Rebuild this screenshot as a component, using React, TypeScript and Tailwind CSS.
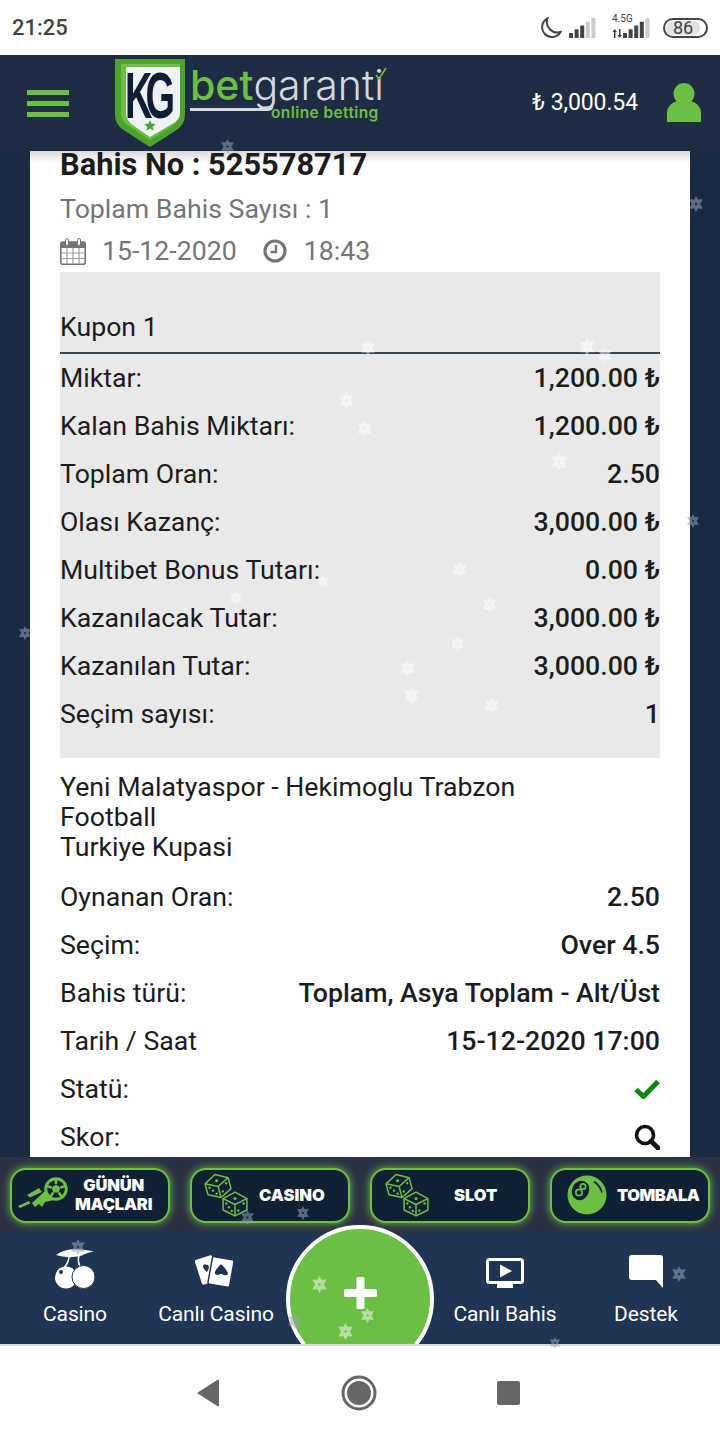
const GREEN = "#6cbe45";

const SUMMARY = [
  ["Miktar:", "1,200.00 ₺"],
  ["Kalan Bahis Miktarı:", "1,200.00 ₺"],
  ["Toplam Oran:", "2.50"],
  ["Olası Kazanç:", "3,000.00 ₺"],
  ["Multibet Bonus Tutarı:", "0.00 ₺"],
  ["Kazanılacak Tutar:", "3,000.00 ₺"],
  ["Kazanılan Tutar:", "3,000.00 ₺"],
  ["Seçim sayısı:", "1"],
];

const DETAILS = [
  ["Oynanan Oran:", "2.50"],
  ["Seçim:", "Over 4.5"],
  ["Bahis türü:", "Toplam, Asya Toplam - Alt/Üst"],
  ["Tarih / Saat", "15-12-2020 17:00"],
];

// [x, y, size, colour]
const LIGHT = "rgba(255,255,255,0.5)";
const DARK = "rgba(150,162,180,0.55)";
const FLAKES: [number, number, number, string][] = [
  [227, 146, 15, DARK],
  [696, 204, 16, DARK],
  [368, 348, 16, LIGHT],
  [587, 347, 18, LIGHT],
  [605, 355, 16, LIGHT],
  [346, 400, 17, LIGHT],
  [364, 428, 17, LIGHT],
  [559, 462, 18, LIGHT],
  [693, 521, 14, DARK],
  [459, 569, 17, LIGHT],
  [489, 604, 17, LIGHT],
  [25, 633, 14, DARK],
  [457, 643, 15, LIGHT],
  [407, 668, 17, LIGHT],
  [411, 695, 17, LIGHT],
  [491, 705, 17, LIGHT],
  [236, 598, 14, LIGHT],
  [323, 582, 12, LIGHT],
  [78, 1247, 16, DARK],
  [247, 1217, 15, DARK],
  [303, 1213, 14, DARK],
  [319, 1284, 17, LIGHT],
  [295, 1321, 16, DARK],
  [345, 1331, 17, LIGHT],
  [367, 1315, 15, LIGHT],
  [679, 1274, 16, DARK],
  [555, 1343, 12, DARK],
];

function Flake({ x, y, size, color }: { x: number; y: number; size: number; color: string }) {
  return (
    <svg
      className="absolute z-30 pointer-events-none blur-[0.4px]"
      style={{ left: x - size / 2, top: y - size / 2, width: size, height: size }}
      viewBox="0 0 20 20"
    >
      <path
        fill={color}
        fillRule="evenodd"
        d="M10 0l2.200 4.300 6.300-.1-3.200 5.800 3.200 5.800-6.300-.1L10 20l-2.200-4.300-6.300.1L4.700 10 1.500 4.200l6.300.1ZM10 8.500a1.500 1.500 0 1 0 0 3 1.500 1.500 0 0 0 0-3Z"
      />
    </svg>
  );
}

function SignalBars({ levels }: { levels: string[] }) {
  return (
    <svg width="28" height="20" viewBox="0 0 28 20">
      {levels.map((c, i) => {
        const h = 5 + i * 3.75;
        return <rect key={i} x={i * 5.6} y={20 - h} width="4" height={h} fill={c} />;
      })}
    </svg>
  );
}

function StatusBar() {
  return (
    <div className="h-[55px] shrink-0 bg-white flex items-center justify-between pl-[12px] pr-[12px]">
      <span className="text-[22px] font-medium text-[#444]">21:25</span>
      <div className="flex items-center">
        <svg width="24" height="22" viewBox="0 0 24 22" fill="none" className="mr-[7px]">
          <path d="M9.500 1.500A9.800 9.800 0 1 0 22.500 15 10.500 10.500 0 0 1 9.500 1.500Z" stroke="#444" strokeWidth="2" />
        </svg>
        <SignalBars levels={["#444", "#444", "#444", "#ccc", "#ccc"]} />
        <div className="relative ml-[15px] mr-[12px] w-[39px] h-[20px] flex justify-end">
          <span className="absolute left-0 top-[-4px] text-[10px] leading-[10px] text-[#444]">4.5G</span>
          <svg width="10" height="9" viewBox="0 0 10 9" className="absolute left-0 bottom-0" fill="#444">
            <path d="M2 9V3H0.500L2.800 0 5 3H3.500V9ZM7 0V6H5.500L7.800 9 10 6H8.500V0Z" />
          </svg>
          <SignalBars levels={["#444", "#444", "#444", "#444", "#ccc"]} />
        </div>
        <div className="w-[45px] h-[20px] rounded-full border-2 border-[#444] p-[1px] flex">
          <div className="w-[34px] rounded-full bg-[#e2e2e2] flex items-center justify-center text-[18px] leading-none text-[#444]">
            86
          </div>
        </div>
      </div>
    </div>
  );
}

function Logo() {
  return (
    <div className="flex items-start relative h-[88px] w-[270px]">
      <svg width="70" height="88" viewBox="0 0 70 88" className="shrink-0">
        <path d="M0 0H70V56Q70 66 60 72L35 88 10 72Q0 66 0 56Z" fill="#4fa32d" />
        <path d="M6 5H65V54Q65 62 57 67L35 81 14 67Q6 62 6 54Z" fill="#6cbe45" />
        <path d="M11 8H65V54Q65 61 57 65L35 78 19 67Q11 62 11 54Z" fill="#eef2f5" />
        <g transform="translate(10 59) scale(1 1.700)">
          <text
            fontSize="38"
            fontWeight="700"
            letterSpacing="-7"
            fontFamily="'Liberation Sans', sans-serif"
            fill="#0f1c38"
            stroke="#eef2f5"
            strokeWidth="0.8"
            paintOrder="stroke"
          >
            KG
          </text>
        </g>
        <path d="M35 61l1.600 3.800 4.100.3-3.100 2.600 1 4-3.600-2.200-3.600 2.200 1-4-3.100-2.600 4.100-.3Z" fill="#4fa32d" />
      </svg>
      <div className="absolute left-[75px] top-[7px] h-[38px] flex font-['Inter',sans-serif] text-[41px] leading-[38px] tracking-[0px] whitespace-nowrap">
        <span className="font-medium text-[#6cbe45]">bet</span>
        <span className="font-light text-[#d5d9de]">garanti</span>
      </div>
      <div className="absolute left-[75px] top-[46px] w-[84px] h-[6px] border-b-[3px] border-[#d5d9de] rounded-br-[8px]" />
      <span className="absolute left-[156px] top-[46px] font-['Inter',sans-serif] text-[15.5px] leading-[16px] tracking-[0.4px] font-semibold text-[#6cbe45] whitespace-nowrap">
        online betting
      </span>
      <svg width="12" height="13" viewBox="0 0 12 13" className="absolute left-[260px] top-[8px]" fill="none">
        <path d="M1 8l3 4L11 1" stroke="#6cbe45" strokeWidth="1.600" />
      </svg>
    </div>
  );
}

function Header() {
  return (
    <header className="relative z-20 h-[96px] shrink-0 bg-[#1e2d44] flex items-center pl-[27px] pr-[19px]">
      <div className="w-[42px] flex flex-col gap-[6px]">
        <div className="h-[5px] bg-[#6cbe45]" />
        <div className="h-[5px] bg-[#6cbe45]" />
        <div className="h-[5px] bg-[#6cbe45]" />
      </div>
      <div className="ml-[46px]">
        <Logo />
      </div>
      <span className="ml-auto text-[23px] text-white tracking-[-0.1px]">₺ 3,000.54</span>
      <svg width="34" height="39" viewBox="0 0 34 39" className="ml-[29px] mb-[2px]" fill={GREEN}>
        <ellipse cx="17" cy="11" rx="10.500" ry="11" />
        <path d="M0 39V30C0 23 6 19 10 18.500 13 22 21 22 24 18.500 28 19 34 23 34 30V39Q17 40 0 39Z" />
      </svg>
    </header>
  );
}

function InfoRow({ label, value }: { label: string; value: string }) {
  return (
    <div className="h-[48px] flex items-center justify-between">
      <span>{label}</span>
      <span className="font-medium whitespace-nowrap">{value}</span>
    </div>
  );
}

function CalendarIcon() {
  return (
    <svg width="26" height="27" viewBox="0 0 26 27" className="shrink-0" fill="none">
      <rect x="0.800" y="4" width="24.400" height="22.200" rx="2" stroke="#757575" strokeWidth="1.600" />
      <rect x="1" y="4" width="24" height="6" fill="#757575" />
      <path d="M1 15h24M1 20.500h24M7 10v16M13 10v16M19 10v16" stroke="#a0a0a0" strokeWidth="1.200" />
      <rect x="5.500" y="0.500" width="3" height="7" rx="1.500" fill="#fff" stroke="#757575" />
      <rect x="17.500" y="0.500" width="3" height="7" rx="1.500" fill="#fff" stroke="#757575" />
    </svg>
  );
}

function ClockIcon() {
  return (
    <svg width="24" height="24" viewBox="0 0 24 24" className="ml-[26px] shrink-0" fill="none" stroke="#757575">
      <circle cx="12" cy="12" r="10" strokeWidth="3.200" />
      <path d="M13 6v7H7.500" strokeWidth="2.400" />
    </svg>
  );
}

function Ticket() {
  return (
    <div className="flex-1 min-h-0 px-[30px]">
      <div className="relative h-full bg-white px-[30px] text-[26.7px] text-[#1c1c1c]">
        <div className="absolute left-0 right-0 top-0 h-[12px] bg-gradient-to-b from-[#d9d9d9] to-transparent" />
        <h2 className="relative h-[28px] text-[30.8px] leading-[28px] font-bold">Bahis No : 525578717</h2>
        <p className="mt-[15px] h-[30px] leading-[30px] text-[#757575]">Toplam Bahis Sayısı : 1</p>
        <div className="mt-[12px] h-[30px] flex items-center text-[#757575]">
          <CalendarIcon />
          <span className="ml-[16px]">15-12-2020</span>
          <ClockIcon />
          <span className="ml-[17px]">18:43</span>
        </div>
        <section className="mt-[6px] bg-[#e9e9e9] h-[486px]">
          <div className="h-[82px] pt-[40px] leading-[30px] border-b-2 border-[#3a4254]">Kupon 1</div>
          {SUMMARY.map(([label, value]) => (
            <InfoRow key={label} label={label} value={value} />
          ))}
        </section>
        <div className="mt-[14px] leading-[30px]">
          <div>Yeni Malatyaspor - Hekimoglu Trabzon</div>
          <div>Football</div>
          <div>Turkiye Kupasi</div>
        </div>
        <div className="mt-[11px]">
          {DETAILS.map(([label, value]) => (
            <InfoRow key={label} label={label} value={value} />
          ))}
          <div className="h-[48px] flex items-center justify-between">
            <span>Statü:</span>
            <svg width="26" height="20" viewBox="0 0 26 20" fill="none">
              <path d="M2 10.500L9.500 17.500 24 2.500" stroke="#0a8a0a" strokeWidth="5" />
            </svg>
          </div>
          <div className="h-[48px] flex items-center justify-between">
            <span>Skor:</span>
            <svg width="26" height="26" viewBox="0 0 26 26" fill="none" stroke="#111">
              <circle cx="11" cy="11" r="8.500" strokeWidth="3.600" />
              <path d="M17 17l7 7" strokeWidth="4.600" strokeLinecap="round" />
            </svg>
          </div>
        </div>
      </div>
    </div>
  );
}

function Die({ x, y, rotate }: { x: number; y: number; rotate: number }) {
  return (
    <g
      transform={`translate(${x} ${y}) rotate(${rotate} 13 13) scale(1.083)`}
      fill="none"
      stroke={GREEN}
      strokeWidth="1.400"
      strokeLinejoin="round"
    >
      <path d="M12 1L23 7V17.500L12 23 1 17.500V7Z" />
      <path d="M1 7L12 12.500 23 7M12 12.500V23" />
      <g fill={GREEN} stroke="none">
        <circle cx="12" cy="7" r="1.400" />
        <circle cx="4" cy="11.500" r="1.100" />
        <circle cx="6.500" cy="15" r="1.100" />
        <circle cx="9" cy="18.500" r="1.100" />
        <circle cx="20" cy="11.500" r="1.100" />
        <circle cx="15" cy="18" r="1.100" />
      </g>
    </g>
  );
}

function DiceIcon() {
  return (
    <svg width="46" height="44" viewBox="0 0 46 44">
      <Die x={1} y={0} rotate={-15} />
      <Die x={18} y={18} rotate={0} />
    </svg>
  );
}

function BallIcon() {
  return (
    <svg width="50" height="36" viewBox="0 0 50 36">
      <g fill={GREEN}>
        <path d="M0 29l11-5 1.200 2.500L2 31Z" />
        <path d="M9 18l12-7 3 4-12 5.500Z" />
        <path d="M14 26l13-12 9 9-9 2-3 5-3-3-4 3Z" />
      </g>
      <circle cx="38" cy="12" r="11.700" fill={GREEN} />
      <circle cx="38" cy="12" r="8.800" fill="#0f2035" />
      <path d="M38 7.500l4.300 3.100-1.600 5h-5.400l-1.600-5Z" fill={GREEN} />
      <path d="M38 1v6M48 9l-5.700 1.600M44.500 21l-3.800-5.400M31.500 21l3.800-5.400M28 9l5.700 1.600" stroke={GREEN} strokeWidth="2.600" />
    </svg>
  );
}

function PoolIcon() {
  return (
    <svg width="40" height="40" viewBox="0 0 40 40">
      <circle cx="20" cy="20" r="19.500" fill={GREEN} />
      <ellipse cx="13.500" cy="15.500" rx="8.500" ry="10" fill="#0f2035" transform="rotate(25 13.500 15.500)" />
      <circle cx="16" cy="11.500" r="2.700" fill="none" stroke={GREEN} strokeWidth="1.700" />
      <circle cx="12" cy="17.500" r="3.200" fill="none" stroke={GREEN} strokeWidth="1.700" />
      <path d="M27 6.500q6 4 8 11" stroke="#0f2035" strokeWidth="1.800" fill="none" />
    </svg>
  );
}

function Promo({
  icon,
  iconClass,
  label,
  labelClass,
}: {
  icon: React.ReactNode;
  iconClass: string;
  label: React.ReactNode;
  labelClass: string;
}) {
  return (
    <div className="relative w-[160px] h-[55px] rounded-[16px] border-2 border-[#6cbe45] bg-[#0f2035] shadow-[0_0_9px_#6cbe45]">
      <div className={`${iconClass} absolute top-0 bottom-0 flex items-center`}>{icon}</div>
      <div
        className={`${labelClass} absolute top-0 bottom-0 flex items-center font-['Inter',sans-serif] text-white text-[16.5px] leading-[19px] font-black whitespace-nowrap`}
      >
        {label}
      </div>
    </div>
  );
}

function PromoStrip() {
  return (
    <div className="relative z-10 h-[76px] shrink-0 bg-[#2b3144] flex items-center gap-[20px] px-[10px]">
      <Promo
        icon={<BallIcon />}
        iconClass="left-[6px]"
        label={<span className="block text-center tracking-[-0.2px]">GÜNÜN<br />MAÇLARI</span>}
        labelClass="left-[63px]"
      />
      <Promo icon={<DiceIcon />} iconClass="left-[12px]" label="CASINO" labelClass="left-[67px]" />
      <Promo icon={<DiceIcon />} iconClass="left-[13px]" label="SLOT" labelClass="left-[82px]" />
      <Promo
        icon={<PoolIcon />}
        iconClass="left-[15px]"
        label={<span className="tracking-[-0.5px]">TOMBALA</span>}
        labelClass="left-[65px]"
      />
    </div>
  );
}

function Cherries() {
  return (
    <svg width="40" height="40" viewBox="0 0 40 40" fill="#fff">
      <path d="M1 6Q10 -1 26 0.500 33 1 39 2.500 31 4 27 6.500 13 10 1 6Z" />
      <path d="M14 7Q14 13 9 19M24 6Q22 13 26 19" stroke="#fff" strokeWidth="1.600" fill="none" />
      <circle cx="11" cy="28.500" r="11" />
      <circle cx="28.500" cy="28" r="11.500" stroke="#203556" strokeWidth="1" />
      <circle cx="6" cy="23" r="2" fill="#203556" />
    </svg>
  );
}

function Cards() {
  return (
    <svg width="42" height="34" viewBox="0 0 42 34" fill="#fff">
      <rect x="3" y="2" width="18" height="26" rx="2" transform="rotate(-18 12 15)" />
      <rect x="15" y="3" width="22" height="28" rx="2" transform="rotate(10 26 17)" stroke="#203556" strokeWidth="1.500" />
      <path d="M12 10q-3-2-4 1 0 3 4 6 2-3 2-5-1-3-2-2Z" fill="#203556" />
      <path d="M26 9q6 6 7 9 0 3-4 2-2-1-3-1-1 0-3 1-4 0-3-3 1-3 6-8Z" fill="#203556" />
    </svg>
  );
}

function LiveTv() {
  return (
    <svg width="38" height="31" viewBox="0 0 38 31" fill="none">
      <rect x="1.500" y="1.500" width="35" height="23" rx="2" stroke="#fff" strokeWidth="3" />
      <path d="M14 6.500L26 13 14 19.500Z" fill="#fff" />
      <rect x="11" y="26" width="16" height="4" fill="#fff" />
    </svg>
  );
}

function Chat() {
  return (
    <svg width="34" height="34" viewBox="0 0 34 34" fill="#fff">
      <path d="M3 0H31Q34 0 34 3V33L27 25H3Q0 25 0 22V3Q0 0 3 0Z" />
    </svg>
  );
}

function NavItem({ icon, label }: { icon: React.ReactNode; label: string }) {
  return (
    <div className="flex flex-col items-center">
      <div className="h-[56px] flex items-end justify-center">{icon}</div>
      <span className="mt-[12px] text-[21px] leading-[26px] text-white whitespace-nowrap tracking-[-0.1px]">{label}</span>
    </div>
  );
}

function BottomNav() {
  return (
    <nav className="relative z-[15] h-[111px] shrink-0 bg-[#203556] grid grid-cols-[150px_132px_148px_150px_132px] content-start">
      <NavItem icon={<Cherries />} label="Casino" />
      <NavItem icon={<Cards />} label="Canlı Casino" />
      <div />
      <NavItem icon={<LiveTv />} label="Canlı Bahis" />
      <NavItem icon={<Chat />} label="Destek" />
      <div className="absolute left-[286px] top-[-8px] w-[148px] h-[148px] rounded-full bg-[#6cbe45] border-[4px] border-white flex items-center justify-center pb-[12px]">
        <svg width="33" height="32" viewBox="0 0 33 32" fill="#fff">
          <rect x="12.500" y="0" width="8" height="32" rx="1.500" />
          <rect x="0" y="12" width="33" height="8" rx="1.500" />
        </svg>
      </div>
    </nav>
  );
}

function AndroidNav() {
  return (
    <div className="relative z-20 h-[96px] shrink-0 bg-white border-t-[2px] border-[#d5d8dc] flex items-center justify-center">
      <div className="relative w-[720px] h-[40px]">
        <svg width="24" height="28" viewBox="0 0 24 28" className="absolute left-[196px] top-[6px]" fill="#666">
          <path d="M1 14L22 0.500Q23 0.500 23 2V26Q23 27.500 22 27.500Z" />
        </svg>
        <svg width="36" height="36" viewBox="0 0 36 36" className="absolute left-[341px] top-[2px]">
          <circle cx="18" cy="18" r="16" fill="none" stroke="#666" strokeWidth="3" />
          <circle cx="18" cy="18" r="12" fill="#666" />
        </svg>
        <div className="absolute left-[497px] top-[8px] w-[23px] h-[24px] rounded-[2px] bg-[#666]" />
      </div>
    </div>
  );
}

export default function App() {
  return (
    <div className="relative w-[720px] h-[1440px] overflow-hidden flex flex-col bg-[#1a2a42] font-['Roboto',sans-serif]">
      <StatusBar />
      <Header />
      <Ticket />
      <PromoStrip />
      <BottomNav />
      <AndroidNav />
      {FLAKES.map(([x, y, s, c]) => (
        <Flake key={`${x}-${y}`} x={x} y={y} size={s} color={c} />
      ))}
    </div>
  );
}
